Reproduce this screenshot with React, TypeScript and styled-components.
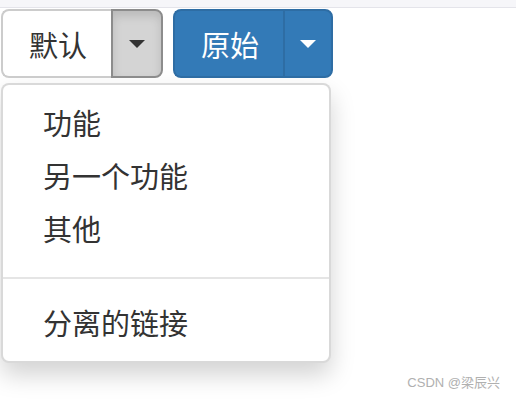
import React from "react";
import styled, { createGlobalStyle } from "styled-components";

const GlobalStyle = createGlobalStyle`
  html, body {
    margin: 0;
    padding: 0;
    background: #ffffff;
    font-family: "Noto Sans CJK SC", "Noto Sans", "Liberation Sans", sans-serif;
  }
  * { box-sizing: border-box; }
`;

const Page = styled.div`
  position: relative;
  width: 516px;
  height: 400px;
  overflow: hidden;
`;

const TopStrip = styled.div`
  height: 8px;
  background: #f6f6f9;
  border-bottom: 1px solid #e4e4ea;
`;

const Content = styled.div`
  padding: 1px 0 0 1px;
`;

const Toolbar = styled.div`
  display: flex;
  gap: 10px;
`;

const BtnGroup = styled.div`
  display: flex;
`;

const Btn = styled.button<{ $primary?: boolean; $active?: boolean; $split?: boolean }>`
  font-family: inherit;
  font-size: 29px;
  line-height: 40px;
  height: 69px;
  margin: 0;
  padding: ${(p) => (p.$split ? (p.$primary ? "0 15px" : "0 16px") : "0 26px")};
  display: flex;
  align-items: center;
  justify-content: center;
  cursor: pointer;
  color: ${(p) => (p.$primary ? "#ffffff" : "#333333")};
  background: ${(p) => (p.$primary ? "#337ab7" : p.$active ? "#d4d4d4" : "#ffffff")};
  border: 2px solid ${(p) => (p.$primary ? "#2e6da4" : p.$active ? "#8c8c8c" : "#cccccc")};
  border-radius: ${(p) => (p.$split ? "0 8px 8px 0" : "8px 0 0 8px")};
  margin-left: ${(p) => (p.$split ? "-2px" : "0")};
  ${(p) => (p.$split ? "" : "border-right-width: 0;")}
  ${(p) => (p.$active ? "box-shadow: inset 0 5px 10px rgba(0,0,0,0.125);" : "")}
`;

const Caret = styled.span<{ $light?: boolean }>`
  display: inline-block;
  width: 0;
  height: 0;
  border-top: 8px solid ${(p) => (p.$light ? "#ffffff" : "#333333")};
  border-left: 8px solid transparent;
  border-right: 8px solid transparent;
`;

const Menu = styled.ul`
  list-style: none;
  margin: 5px 0 0;
  width: 330px;
  padding: 11px 0 12px;
  background: #ffffff;
  border: 2px solid rgba(0, 0, 0, 0.15);
  border-radius: 8px;
  box-shadow: 0 12px 24px rgba(0, 0, 0, 0.175);
`;

const MenuItem = styled.li`
  padding: 6px 40px;
  font-size: 29px;
  line-height: 41px;
  color: #333333;
  white-space: nowrap;
`;

const Divider = styled.li`
  height: 2px;
  margin: 22px 0 17px;
  background: #e5e5e5;
`;

const Watermark = styled.div`
  position: absolute;
  right: 16px;
  bottom: 9px;
  font-size: 13px;
  color: #b0b0b0;
  font-family: "Liberation Sans", "Noto Sans CJK SC", sans-serif;
`;

export default function App() {
  return (
    <Page>
      <GlobalStyle />
      <TopStrip />
      <Content>
        <Toolbar>
          <BtnGroup>
            <Btn>默认</Btn>
            <Btn $split $active>
              <Caret />
            </Btn>
          </BtnGroup>
          <BtnGroup>
            <Btn $primary>原始</Btn>
            <Btn $primary $split>
              <Caret $light />
            </Btn>
          </BtnGroup>
        </Toolbar>
        <Menu>
          <MenuItem>功能</MenuItem>
          <MenuItem>另一个功能</MenuItem>
          <MenuItem>其他</MenuItem>
          <Divider />
          <MenuItem>分离的链接</MenuItem>
        </Menu>
      </Content>
      <Watermark>CSDN @梁辰兴</Watermark>
    </Page>
  );
}
